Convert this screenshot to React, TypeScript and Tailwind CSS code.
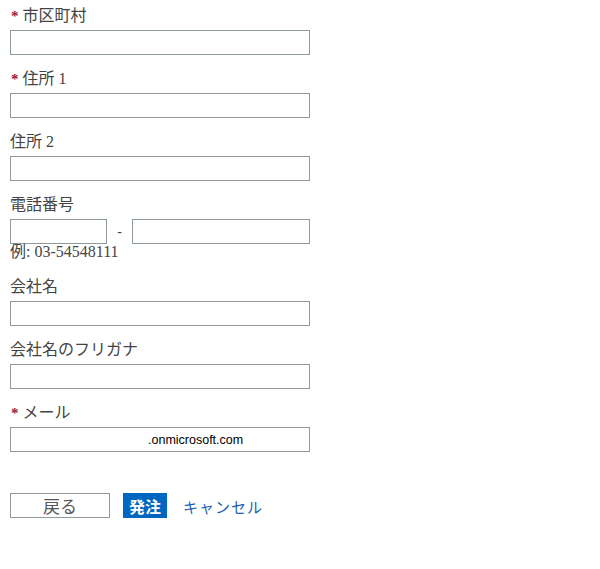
const serif = "font-['Liberation_Serif','Noto_Sans_CJK_JP',serif]"

function Label({ text, required }: { text: string; required?: boolean }) {
  return (
    <div className={`h-5 leading-[22px] text-[16px] text-[#444] mb-[5px] ${serif}`}>
      {required && <span className="text-[#9b1b3c] text-[15px] font-bold mr-[4px] ml-px">*</span>}
      {text}
    </div>
  )
}

function TextInput({ value, className = '' }: { value?: string; className?: string }) {
  return (
    <input
      readOnly
      value={value ?? ''}
      className={`block h-[25px] border border-[#8f9b9b] bg-white outline-none text-[12.5px] text-black font-['Liberation_Sans',sans-serif] ${className}`}
    />
  )
}

export default function App() {
  return (
    <div className="w-[600px] h-[569px] bg-white pt-[5px] pl-[10px]">
      <Label text="市区町村" required />
      <TextInput className="w-[300px] mb-[13px]" />

      <Label text="住所 1" required />
      <TextInput className="w-[300px] mb-[13px]" />

      <Label text="住所 2" />
      <TextInput className="w-[300px] mb-[13px]" />

      <Label text="電話番号" />
      <div className="flex items-center w-[300px]">
        <TextInput className="w-[97px]" />
        <span className={`w-[25px] text-center text-[14px] text-[#444] ${serif}`}>-</span>
        <TextInput className="w-[178px]" />
      </div>
      <div className={`h-4 leading-4 text-[16px] text-[#444] mb-4 ${serif}`}>例: 03-54548111</div>

      <Label text="会社名" />
      <TextInput className="w-[300px] mb-[13px]" />

      <Label text="会社名のフリガナ" />
      <TextInput className="w-[300px] mb-[13px]" />

      <Label text="メール" required />
      <TextInput value=".onmicrosoft.com" className="w-[300px] pl-[137px]" />

      <div className="flex items-center mt-10">
        <button className="w-[100px] h-[25px] border border-[#8f9b9b] bg-white text-[17px] text-[#555] font-['Noto_Sans_CJK_JP',sans-serif] leading-none">
          戻る
        </button>
        <button className="ml-[13px] h-[25px] px-[6px] bg-[#0066c0] text-white text-[16px] font-bold font-['Noto_Sans_CJK_JP',sans-serif] leading-none">
          発注
        </button>
        <a className={`ml-[16px] mt-[5px] text-[15px] text-[#1a5fb4] tracking-[1px] ${serif}`}>キャンセル</a>
      </div>
    </div>
  )
}
